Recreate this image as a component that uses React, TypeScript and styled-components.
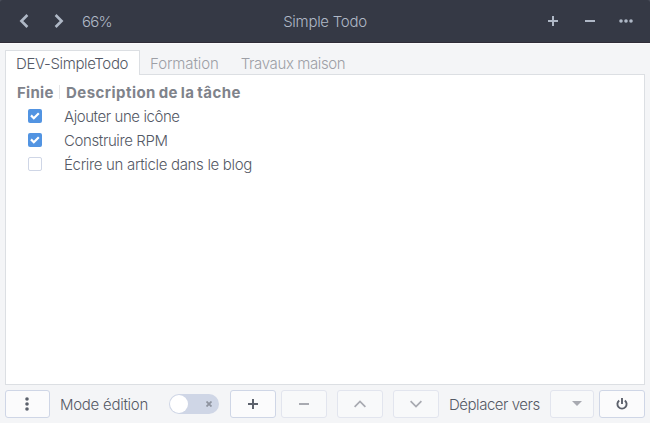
import React from "react";
import styled, { createGlobalStyle, css } from "styled-components";

const Global = createGlobalStyle`
  * { box-sizing: border-box; }
  html, body { margin: 0; padding: 0; }
  body {
    width: 650px;
    height: 423px;
    overflow: hidden;
    background: #f4f5f7;
    color: #545965;
    font: 300 15px/24px Inter, "Open Sans", sans-serif;
  }
  svg { display: block; flex: none; }
`;

const Window = styled.div`
  display: flex;
  flex-direction: column;
  width: 650px;
  height: 423px;
  background: linear-gradient(#4b4f5c, #4b4f5c) top / 100% 6px no-repeat, #f4f5f7;
`;

const Label = styled.span<{ $spacing?: number }>`
  white-space: pre;
  letter-spacing: ${(p) => p.$spacing ?? 0}px;
`;

const HeaderBar = styled.header`
  display: grid;
  grid-template-columns: 1fr auto 1fr;
  align-items: center;
  height: 43px;
  flex: none;
  padding-bottom: 1px;
  background: #353945;
  color: #afb8c6;
  border-bottom: 1px solid #2f2c38;
  border-radius: 3px 3px 0 0;
`;

const HeaderStart = styled.div`
  display: flex;
  align-items: center;
  padding-left: 19px;
`;

const HeaderEnd = styled.div`
  display: flex;
  align-items: center;
  justify-content: flex-end;
  gap: 27px;
  padding-right: 17px;
`;

const MoreIcon = styled.span`
  margin-left: -3px;
`;

const NavIcon = styled.span`
  display: flex;
  width: 35px;
`;

const ZoomLevel = styled.div`
  padding-top: 2px;
  margin-left: -7px;
`;

const Title = styled.div`
  padding-top: 3px;
`;

const TabStrip = styled.nav`
  display: flex;
  height: 31px;
  flex: none;
  padding: 6px 0 0 5px;
  border-top: 1px solid #fbfbfc;
`;

const Tab = styled.div<{ $active?: boolean }>`
  height: 24px;
  padding: 1px 12px 0 10px;
  line-height: 26px;
  color: #9d9fa6;
  ${(p) =>
    p.$active &&
    css`
      width: 135px;
      height: 25px;
      position: relative;
      padding: 0 10px;
      color: #545965;
      background: #fff;
      border: 1px solid #dcdfe3;
      border-bottom: 0;
      border-radius: 1px 1px 0 0;
    `}
`;

const Panel = styled.main`
  height: 311px;
  flex: none;
  margin: 0 5px;
  padding-top: 6px;
  background: #fff;
  border: 1px solid #dcdfe3;
`;

const Row = styled.div`
  display: grid;
  grid-template-columns: 58px 1fr;
  height: 24px;
  line-height: 24px;
`;

const HeadRow = styled(Row)`
  grid-template-columns: 54px 1fr;
  color: #7f838b;
  font-weight: 700;
  word-spacing: -1.2px;
`;

const HeadCell = styled.div<{ $divider?: boolean }>`
  display: flex;
  height: 14px;
  margin-top: 4px;
  line-height: 16px;
  padding-left: ${(p) => (p.$divider ? 11 : 6)}px;
  border-right: ${(p) => (p.$divider ? "1px solid #e6e7e9" : "0")};
`;

const CheckCell = styled.div`
  padding: 4px 0 0 22px;
`;

const Checkbox = styled.span<{ $checked: boolean }>`
  display: flex;
  width: 14px;
  height: 14px;
  border-radius: 2px;
  border: ${(p) => (p.$checked ? "0" : "1px solid #cfd6e6")};
  background: ${(p) => (p.$checked ? "#5294e2" : "#fff")};
`;

const Toolbar = styled.footer`
  display: flex;
  align-items: center;
  height: 39px;
  padding: 0 5px;
`;

const Button = styled.button<{ $width?: number; $gap?: number; $disabled?: boolean }>`
  display: flex;
  align-items: center;
  justify-content: center;
  flex: none;
  width: ${(p) => p.$width ?? 46}px;
  height: 28px;
  margin: 0 0 0 ${(p) => p.$gap ?? 0}px;
  padding: 0;
  border: 1px solid ${(p) => (p.$disabled ? "#e2e5ee" : "#cfd6e6")};
  border-radius: 3px;
  background: ${(p) => (p.$disabled ? "#f8f9fa" : "#fbfbfc")};
  color: ${(p) => (p.$disabled ? "#a8aab1" : "#5c616c")};
`;

const BarLabel = styled.div<{ $width: number; $gap: number }>`
  width: ${(p) => p.$width}px;
  flex: none;
  margin-left: ${(p) => p.$gap}px;
  padding-top: 2px;
`;

const Switch = styled.div`
  display: flex;
  align-items: center;
  justify-content: space-between;
  flex: none;
  width: 50px;
  height: 20px;
  padding: 0 7px 0 1px;
  border-radius: 10px;
  background: #cfd6e6;
`;

const Knob = styled.span`
  width: 18px;
  height: 18px;
  border-radius: 50%;
  background: #fff;
`;

const Chevron = ({ flip = false }: { flip?: boolean }) => (
  <svg width="10" height="14" viewBox="0 0 10 14" fill="none" stroke="currentColor" strokeWidth="2.6">
    <path d={flip ? "M1.6 1 7.6 7l-6 6" : "M8.4 1 2.4 7l6 6"} />
  </svg>
);

const Plus = () => (
  <svg width="10" height="10" viewBox="0 0 10 10" fill="currentColor">
    <path d="M4 0h2v4h4v2H6v4H4V6H0V4h4z" />
  </svg>
);

const Minus = () => (
  <svg width="10" height="10" viewBox="0 0 10 10" fill="currentColor">
    <path d="M0 4h10v2H0z" />
  </svg>
);

const Dots = ({ vertical = false }: { vertical?: boolean }) => (
  <svg width={vertical ? 13 : 14} height="14" viewBox={vertical ? "0 0 13 14" : "0 0 14 14"} fill="currentColor">
    {[2, 7, 12].map((c) => (
      <circle key={c} cx={vertical ? 6 : c} cy={vertical ? c : 7} r="1.8" />
    ))}
  </svg>
);

const Arrow = ({ down = false }: { down?: boolean }) => (
  <svg width="12" height="8" viewBox="0 0 12 8" fill="none" stroke="currentColor" strokeWidth="1.8">
    <path d={down ? "M.6 1.2 6 6.6l5.4-5.4" : "M.6 6.8 6 1.4l5.4 5.4"} />
  </svg>
);

const tasks = [
  { text: "Ajouter une icône", done: true, spacing: -0.43 },
  { text: "Construire RPM", done: true, spacing: -0.39 },
  { text: "Écrire un article dans le blog", done: false, spacing: -0.33 },
];

export default function App() {
  return (
    <>
      <Global />
      <Window>
        <HeaderBar>
          <HeaderStart>
            <NavIcon><Chevron /></NavIcon>
            <NavIcon><Chevron flip /></NavIcon>
            <ZoomLevel><Label $spacing={-0.8}>66%</Label></ZoomLevel>
          </HeaderStart>
          <Title><Label $spacing={-0.27}>Simple Todo</Label></Title>
          <HeaderEnd>
            <Plus />
            <Minus />
            <MoreIcon><Dots /></MoreIcon>
          </HeaderEnd>
        </HeaderBar>
        <TabStrip>
          <Tab $active><Label $spacing={-0.36}>DEV-SimpleTodo</Label></Tab>
          <Tab><Label $spacing={-0.1}>Formation</Label></Tab>
          <Tab><Label $spacing={-0.38}>Travaux maison</Label></Tab>
        </TabStrip>
        <Panel>
          <HeadRow>
            <HeadCell $divider><Label $spacing={0.3}>Finie</Label></HeadCell>
            <HeadCell><Label $spacing={0.46}>Description de la tâche</Label></HeadCell>
          </HeadRow>
          {tasks.map((t) => (
            <Row key={t.text}>
              <CheckCell>
                <Checkbox $checked={t.done}>
                  {t.done && (
                    <svg width="14" height="14" viewBox="0 0 14 14" fill="none" stroke="#fff" strokeWidth="2.2">
                      <path d="m3 6.4 2.8 2.8 5-5" />
                    </svg>
                  )}
                </Checkbox>
              </CheckCell>
              <Label $spacing={t.spacing}>{t.text}</Label>
            </Row>
          ))}
        </Panel>
        <Toolbar>
          <Button $width={45}><Dots vertical /></Button>
          <BarLabel $gap={10} $width={109}><Label $spacing={-0.27}>Mode édition</Label></BarLabel>
          <Switch>
            <Knob />
            <svg width="6" height="6" viewBox="0 0 6 6" fill="none" stroke="#8e939f" strokeWidth="1.8">
              <path d="m.5.5 5 5m0-5-5 5" />
            </svg>
          </Switch>
          <Button $gap={11}><Plus /></Button>
          <Button $gap={5} $disabled><Minus /></Button>
          <Button $gap={10} $disabled><Arrow /></Button>
          <Button $gap={10} $disabled><Arrow down /></Button>
          <BarLabel $gap={10} $width={101}><Label $spacing={-0.47}>Déplacer vers</Label></BarLabel>
          <Button $width={44} $disabled>
            <svg width="28" height="6" viewBox="0 0 28 6" fill="currentColor">
              <path d="M14 0h10l-5 5z" />
            </svg>
          </Button>
          <Button $gap={5}>
            <svg width="12" height="12" viewBox="0 0 12 12" fill="none" stroke="currentColor" strokeWidth="1.9">
              <path d="M3.2 2.4a4.6 4.6 0 1 0 5.6 0M6 0v6" />
            </svg>
          </Button>
        </Toolbar>
      </Window>
    </>
  );
}
